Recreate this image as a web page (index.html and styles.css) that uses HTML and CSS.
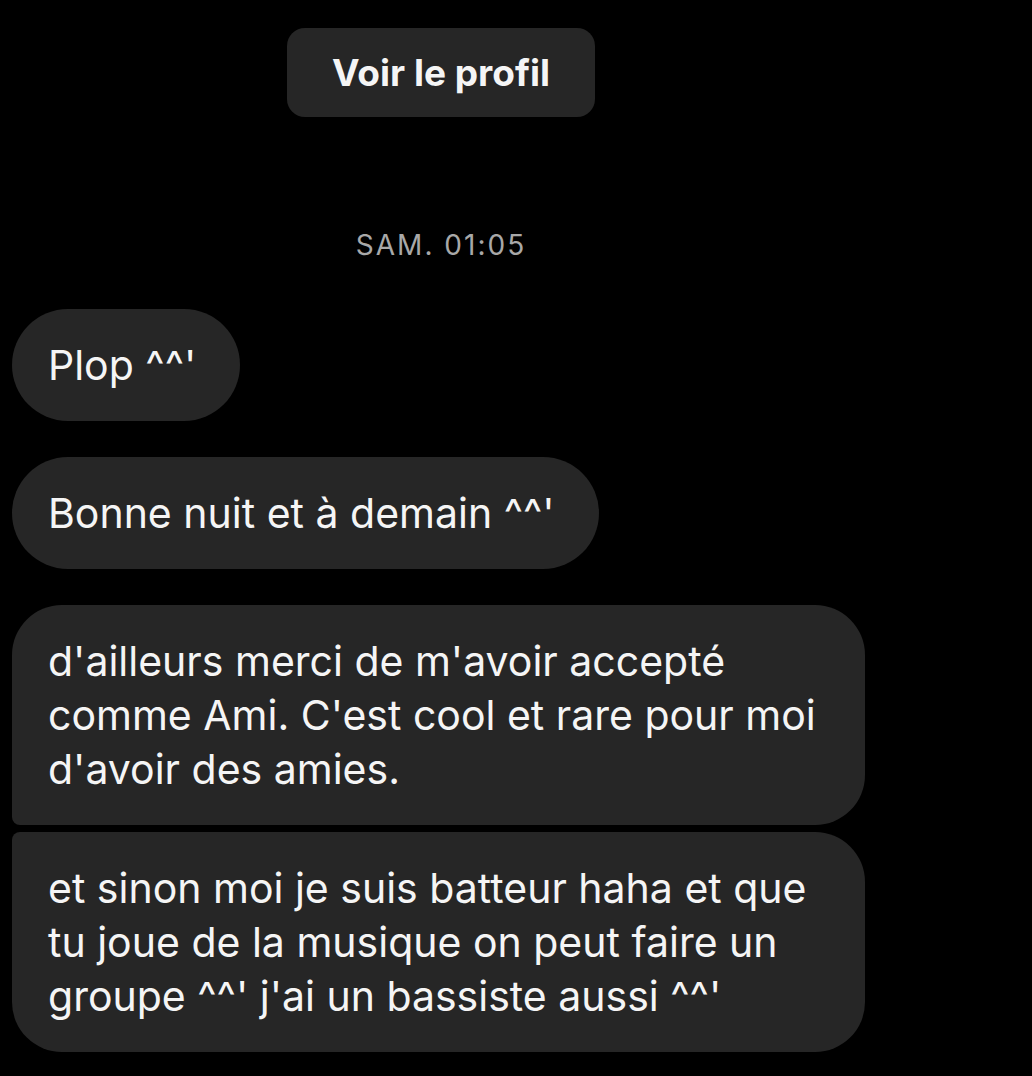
FILE: index.html
```html
<!DOCTYPE html>
<html lang="fr">
<head>
    <meta charset="UTF-8">
    <meta name="viewport" content="width=device-width, initial-scale=1.0">
    <title>Messages</title>
    <link rel="stylesheet" href="styles.css">
</head>

<body>
    <div class="chat">
        <button class="profile-button">Voir le profil</button>

        <div class="timestamp">SAM. 01:05</div>

        <div class="messages">
            <div class="bubble">Plop ^^'</div>
            <div class="bubble">Bonne nuit et à demain ^^'</div>
            <div class="group">
                <div class="bubble first">d'ailleurs merci de m'avoir accepté comme Ami. C'est cool et rare pour moi d'avoir des amies.</div>
                <div class="bubble last">et sinon moi je suis batteur haha et que tu joue de la musique on peut faire un groupe ^^' j'ai un bassiste aussi ^^'</div>
            </div>
        </div>
    </div>
</body>
</html>
```

FILE: styles.css
```css
body {
    margin: 0;
    background-color: #000;
    color: #f5f5f5;
    font-family: Inter, "Liberation Sans", sans-serif;
    overflow: hidden;
}

.chat {
    width: 858px;
    padding: 28px 0 0 12px;
    display: flex;
    flex-direction: column;
}

.profile-button {
    align-self: center;
    width: 308px;
    height: 89px;
    border: none;
    border-radius: 18px;
    background-color: #262626;
    color: #f5f5f5;
    font-family: inherit;
    font-size: 37px;
    font-weight: 700;
}

.timestamp {
    margin-top: 112px;
    text-align: center;
    color: #a8a8a8;
    font-size: 28px;
    letter-spacing: 2px;
    line-height: 32px;
}

.messages {
    margin-top: 48px;
    display: flex;
    flex-direction: column;
    align-items: flex-start;
    gap: 36px;
}

.group {
    display: flex;
    flex-direction: column;
    align-items: flex-start;
    gap: 7px;
}

.bubble {
    max-width: 773px;
    padding: 29px 44px 29px 36px;
    border-radius: 56px;
    background-color: #262626;
    font-size: 41px;
    line-height: 54px;
}

.bubble.first {
    border-radius: 50px 50px 50px 8px;
}

.bubble.last {
    border-radius: 8px 50px 50px 50px;
}
```
